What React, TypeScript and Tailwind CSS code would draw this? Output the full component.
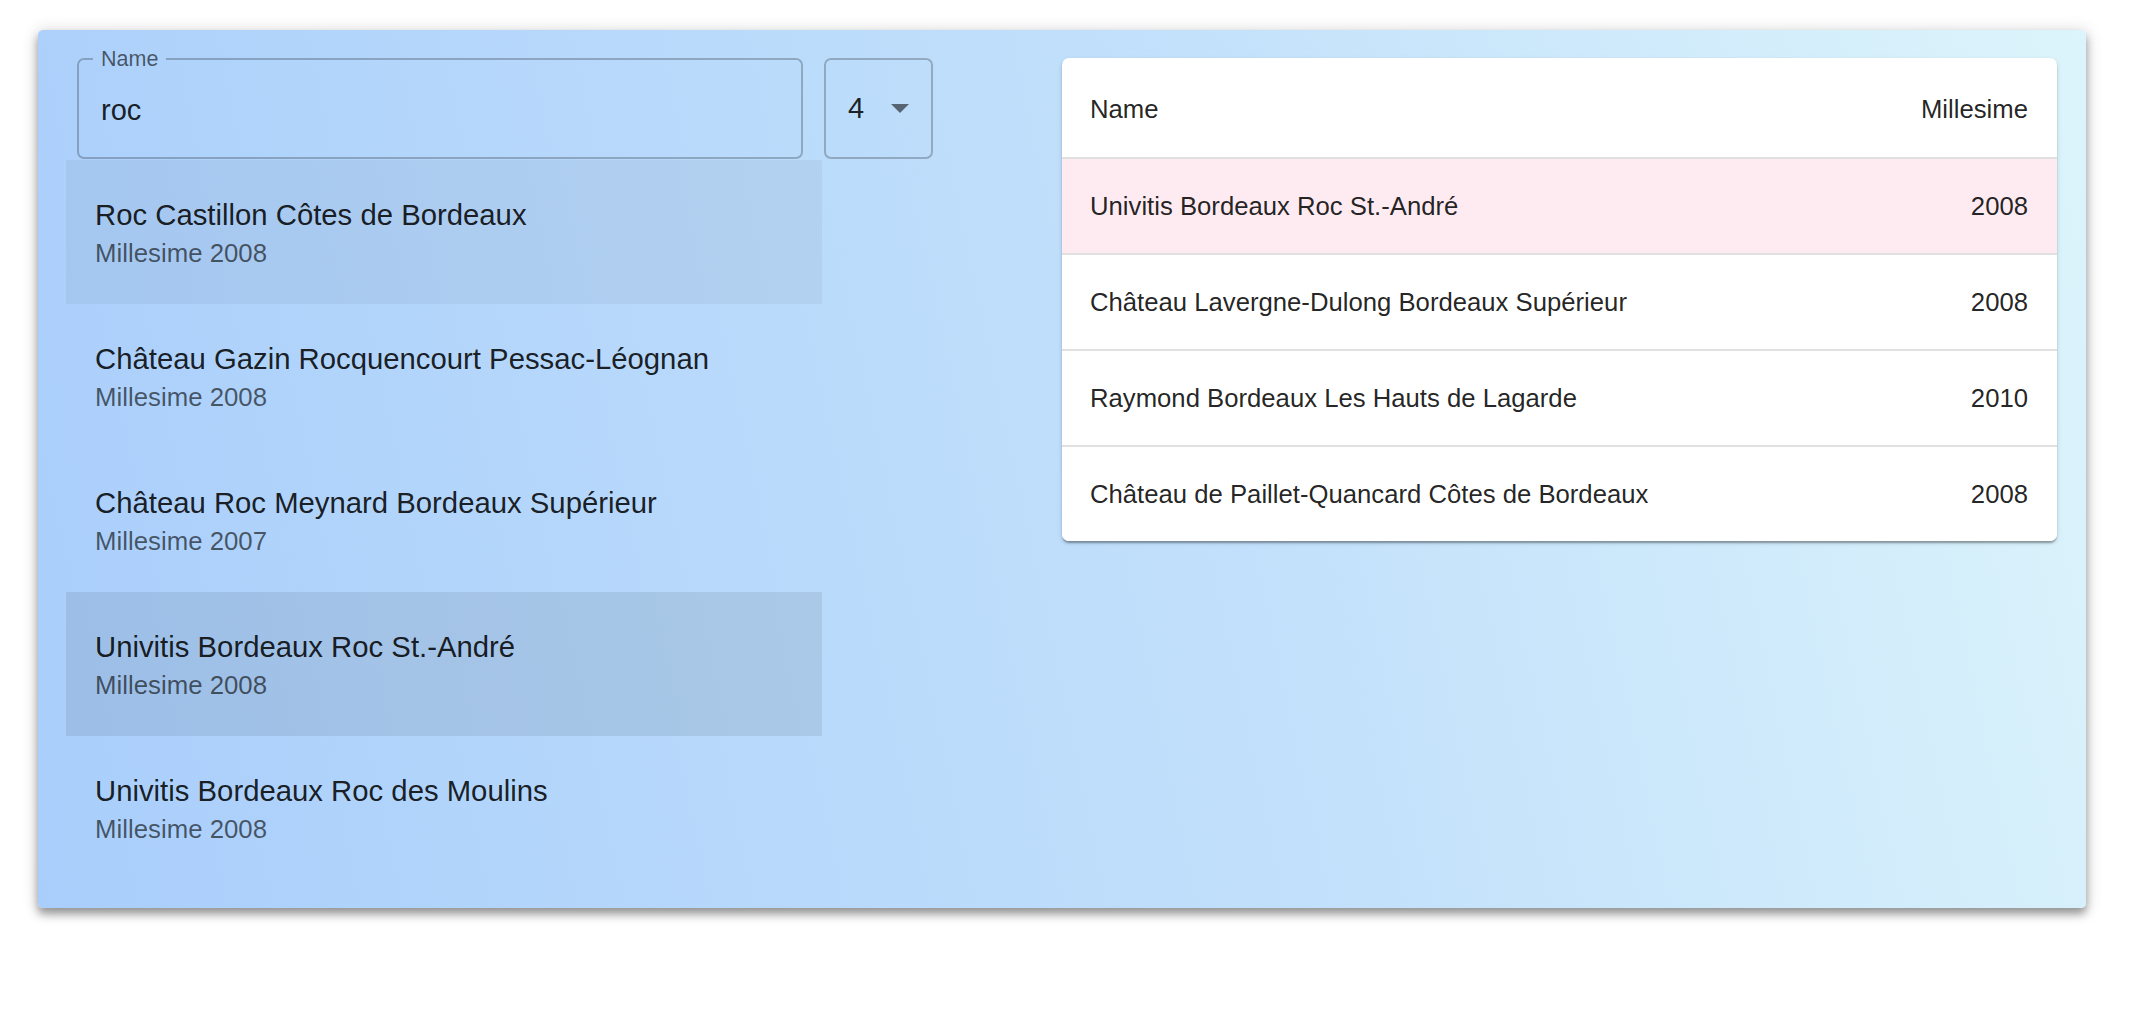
import React from "react";

const FONT = { fontFamily: '"Liberation Sans", Arial, Helvetica, sans-serif' };

const items = [
  { name: "Roc Castillon Côtes de Bordeaux", year: "2008", state: "focus" },
  { name: "Château Gazin Rocquencourt Pessac-Léognan", year: "2008", state: "" },
  { name: "Château Roc Meynard Bordeaux Supérieur", year: "2007", state: "" },
  { name: "Univitis Bordeaux Roc St.-André", year: "2008", state: "selected" },
  { name: "Univitis Bordeaux Roc des Moulins", year: "2008", state: "" },
];

const rows = [
  { name: "Univitis Bordeaux Roc St.-André", year: "2008", pink: true },
  { name: "Château Lavergne-Dulong Bordeaux Supérieur", year: "2008", pink: false },
  { name: "Raymond Bordeaux Les Hauts de Lagarde", year: "2010", pink: false },
  { name: "Château de Paillet-Quancard Côtes de Bordeaux", year: "2008", pink: false },
];

export default function App() {
  return (
    <div className="min-h-[1018px] w-full bg-white pl-[38px] pt-[30px]" style={FONT}>
      <div className="flex w-[2048px] items-start rounded-[5px] bg-[linear-gradient(78deg,#a9cefb_0%,#c3e1fb_60%,#dcf4fb_100%)] pb-[28px] pl-[28px] pr-[29px] pt-[18px] shadow-[0_6px_8px_0_rgba(0,0,0,0.35),0_2px_16px_2px_rgba(0,0,0,0.14)]">
        {/* left column */}
        <div className="flex w-[756px] shrink-0 flex-col">
          <div className="ml-[11px] flex w-[856px] items-end gap-[21px]">
            <fieldset className="w-[726px] shrink-0 rounded-[7px] border-2 border-black/[0.23] px-[14px] pb-[17px] pt-[10px]">
              <legend className="px-[8px] text-[21.5px] leading-[22px] text-black/60">Name</legend>
              <input
                readOnly
                value="roc"
                className="block h-[60px] w-full bg-transparent pl-[8px] text-[29px] leading-[60px] text-black/[0.87] outline-none"
                style={FONT}
              />
            </fieldset>
            <div className="flex h-[101px] w-[109px] shrink-0 items-center rounded-[7px] border-2 border-black/[0.23] pl-[22px]">
              <span className="text-[29px] leading-none text-black/[0.87]">4</span>
              <svg className="ml-[27px]" width="18" height="9" viewBox="0 0 18 9">
                <path d="M0 0 L18 0 L9 9 Z" fill="rgba(0,0,0,0.54)" />
              </svg>
            </div>
          </div>
          <ul className="mt-[1px] flex flex-col">
            {items.map((it) => (
              <li
                key={it.name}
                className={
                  "flex h-[144px] flex-col justify-center pl-[29px] " +
                  (it.state === "focus"
                    ? "bg-black/[0.045]"
                    : it.state === "selected"
                    ? "bg-black/[0.08]"
                    : "")
                }
              >
                <span className="text-[29.3px] leading-[42px] text-black/[0.87]">{it.name}</span>
                <span className="text-[25.8px] leading-[35px] text-black/60">Millesime {it.year}</span>
              </li>
            ))}
          </ul>
        </div>

        {/* right table */}
        <div className="ml-auto mt-[10px] w-[995px] overflow-hidden rounded-[7px] bg-white shadow-[0_3px_2px_-1px_rgba(0,0,0,0.2),0_2px_2px_0_rgba(0,0,0,0.14),0_2px_5px_0_rgba(0,0,0,0.12)]">
          <div className="flex h-[101px] items-center justify-between border-b-2 border-[#e0e0e0] pl-[28px] pr-[29px] pt-[3px] text-[25.7px] text-black/[0.87]">
            <span>Name</span>
            <span>Millesime</span>
          </div>
          {rows.map((r, i) => (
            <div
              key={r.name}
              className={
                "flex items-center justify-between pl-[28px] pr-[29px] pt-[1px] text-[25.7px] text-black/[0.87] " +
                (i < rows.length - 1 ? "h-[96px] border-b-2 border-[#e0e0e0] " : "h-[94px] ") +
                (r.pink ? "bg-[#fdebf1]" : "bg-white")
              }
            >
              <span>{r.name}</span>
              <span>{r.year}</span>
            </div>
          ))}
        </div>
      </div>
    </div>
  );
}
